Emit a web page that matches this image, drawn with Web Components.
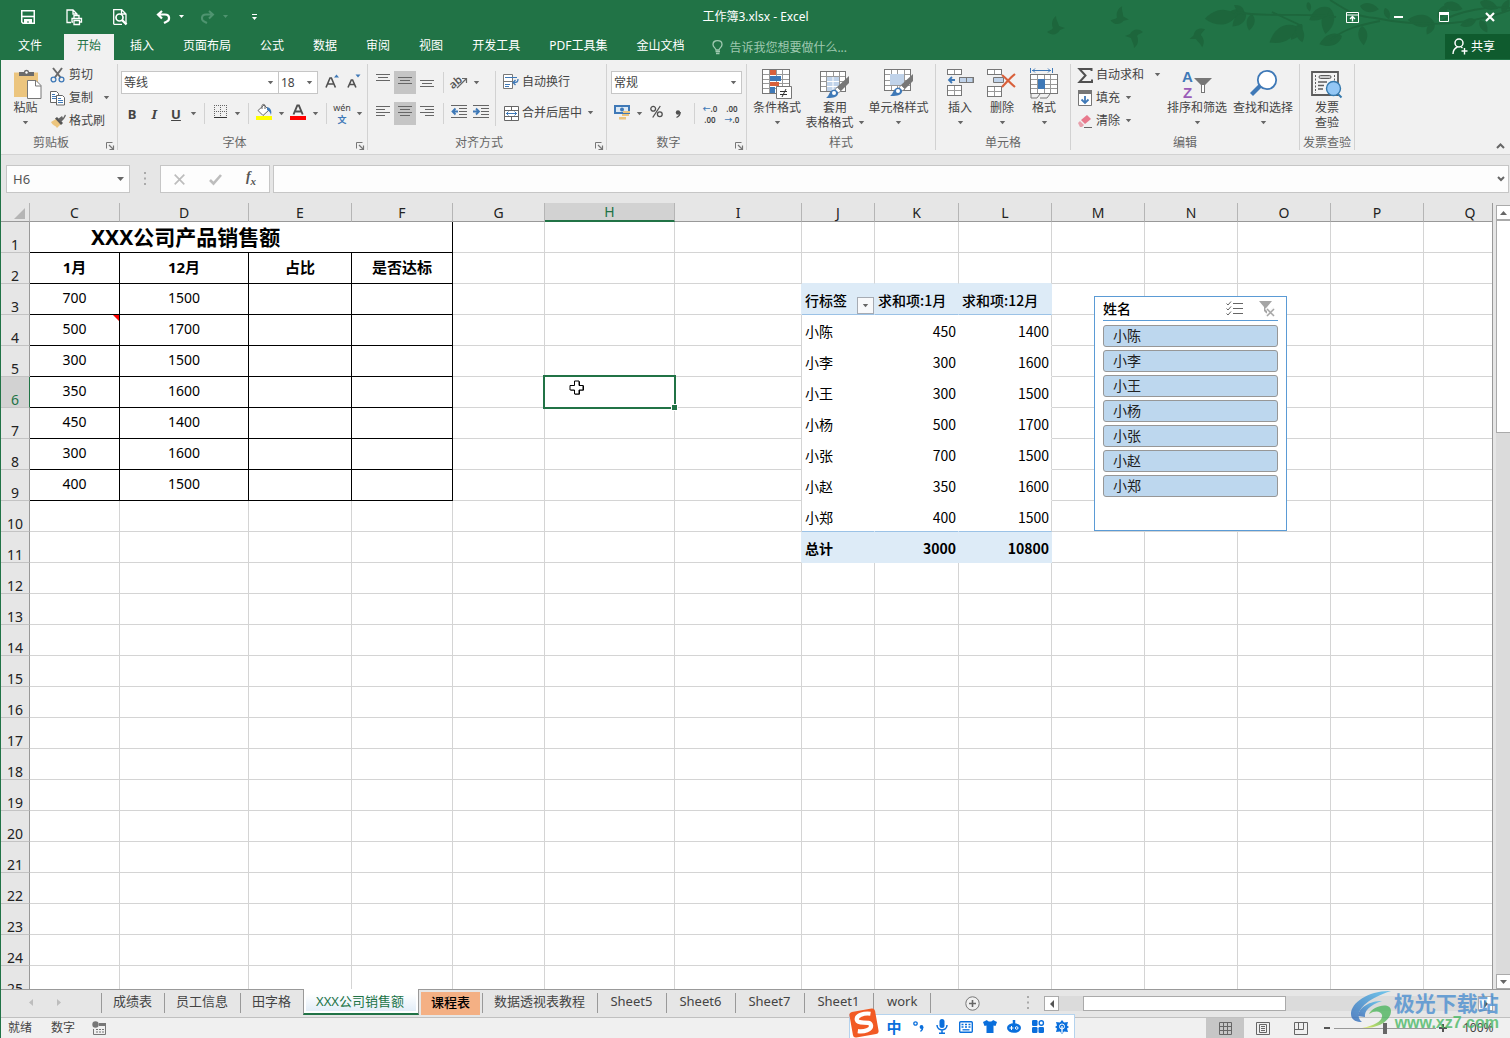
<!DOCTYPE html>
<html lang="zh-CN">
<head>
<meta charset="utf-8">
<title>工作簿3.xlsx - Excel</title>
<style>
html,body{height:100%}
body{margin:0;display:flex;flex-direction:column;overflow:hidden;box-sizing:border-box;border-left:1px solid #217346;background:#e6e6e6;color:#444;font:12px/16px "Noto Sans","Noto Sans CJK SC",sans-serif;position:relative}
</style>
</head>
<body>
<app-header heading="工作簿3.xlsx - Excel"></app-header>
<ribbon-bar></ribbon-bar>
<formula-bar cell="H6"></formula-bar>
<sheet-area>
  <sheet-grid></sheet-grid>
  <data-slicer slot="float" heading="姓名" items="小陈,小李,小王,小杨,小张,小赵,小郑"></data-slicer>
  <x-icon slot="float" class="pointer" name="pointer"></x-icon>
</sheet-area>
<sheet-tabs></sheet-tabs>
<status-bar></status-bar>
<ime-bar></ime-bar>
<site-mark></site-mark>

<script>
const B='#3f79b7', D='#505050';
const grid=(x,y,w,h,c,r,col='#777')=>{let s=`<rect x="${x+.5}" y="${y+.5}" width="${w}" height="${h}" fill="#fff" stroke="${col}"/>`;
  for(let i=1;i<c;i++){const p=Math.round(x+w*i/c)+.5;s+=`<path d="M${p} ${y+1}v${h-1}" stroke="#999"/>`}
  for(let i=1;i<r;i++){const p=Math.round(y+h*i/r)+.5;s+=`<path d="M${x+1} ${p}h${w-1}" stroke="#999"/>`}return s};
const lines=(a)=>a.map(([x,y,w])=>`<path d="M${x} ${y+.5}h${w}" stroke="#666"/>`).join('');
const brush=(x,y)=>`<g transform="translate(${x} ${y})"><path d="M23 0v7l-8 8-4-4z" fill="#777"/><path d="M11 11l4 4-3 2-3-3z" fill="#fff" stroke="#777" stroke-width=".8"/><path d="M0 22c3-2 3-5 5-7 3-3 8 0 7 3-1 4-7 4-12 4z" fill="${B}"/><circle cx="8" cy="17" r="2" fill="#fff"/></g>`;
/* name: [width, height, markup] */
const ICONS={
save:[14,14,`<path d="M.75.75h12.5v12.5H2L.75 12z" fill="none" stroke="#fff" stroke-width="1.5"/><path d="M1 6.5h12" stroke="#fff" stroke-width="1.6"/><path d="M3 9h8v4.500H8v-2H6v2H3z" fill="#fff"/>`],
print:[17,17,`<g fill="none" stroke="#fff" stroke-width="1.300"><path d="M5 13.500H1V1h6l4 4v1M7 1v4h4"/><path d="M8 9V6.500h5V9M7 13H6V9.500h9.500V13H14M8 11.500h5.500v4H8z"/></g>`],
preview:[14,16,`<path d="M13 4.500V15M.7 15.300V.700h8l4 4M.7 15.300H9M8.500 1v4h4" fill="none" stroke="#fff" stroke-width="1.300"/><circle cx="6.500" cy="8.500" r="3.500" fill="none" stroke="#fff" stroke-width="1.700"/><path d="M9 11l4.500 4.500" stroke="#fff" stroke-width="2.400"/>`],
undo:[15,14,`<path d="M6 1L2 4.500l4 4M2 4.500h7c5 0 5.500 6 1 7.500L8 13" fill="none" stroke="#fff" stroke-width="2.200"/>`],
redo:[15,14,`<path d="M9 1l4 3.500-4 4M13 4.500H6C1 4.500.5 10.500 5 12l2 1" fill="none" stroke="#4f9470" stroke-width="2"/>`],
qat:[5,7,`<path d="M0 .5h5" stroke="#fff"/><path d="M0 3h5L2.500 6z" fill="#fff"/>`],
winribbon:[13,11,`<path d="M.5.500h12v10H.5zM.5 3h12" fill="none" stroke="#fff"/><path d="M6.500 9.500V5M4 7l2.500-2.500L9 7" fill="none" stroke="#fff" stroke-width="1.400"/>`],
winmin:[9,2,`<path d="M0 1h9" stroke="#fff" stroke-width="2"/>`],
winmax:[10,10,`<path d="M.5.500h9v9H.5z" fill="none" stroke="#fff"/><path d="M0 1.500h10" stroke="#fff" stroke-width="3"/>`],
winclose:[10,10,`<path d="M1 1l8 8M9 1L1 9" stroke="#fff" stroke-width="2.200"/>`],
bulb:[12,15,`<path d="M4 10c0-2-3-2.500-3-5.500C1 2 3 .7 5.500.7S10 2 10 4.500C10 7.500 7 8 7 10z" fill="none" stroke="#9fc9b0" stroke-width="1.300"/><path d="M3.500 11.500h4.500M4 13.500h3.500" stroke="#9fc9b0" stroke-width="1.400"/>`],
person:[15,17,`<circle cx="7" cy="5" r="4" fill="none" stroke="#fff" stroke-width="1.500"/><path d="M1 16c0-4 2-6 4.500-7M9 9l1.500 1M9.500 13h6M12.500 10v6.500" fill="none" stroke="#fff" stroke-width="1.400"/>`],
paste:[25,30,`<path d="M1 3.500h24V28H1z" fill="#ecc57e"/><path d="M6 7V3h5c0-3 5-3 5 0h5v4z" fill="#6b6b6b"/><circle cx="13.500" cy="3.500" r="1.200" fill="#fff"/><path d="M14.500 11.500h8.500l5 5V29.500H14.500z" fill="#fff" stroke="#777"/><path d="M22.500 11.500v5.500h5.500" fill="none" stroke="#777"/>`],
cut:[16,16,`<path d="M3 1l8 10M12 1L4.500 11" stroke="#6a6a6a" stroke-width="2"/><circle cx="3.500" cy="12.500" r="2.400" fill="none" stroke="${B}" stroke-width="1.300"/><circle cx="11.500" cy="12.500" r="2.400" fill="none" stroke="${B}" stroke-width="1.300"/>`],
copy:[16,16,`<path d="M.5 1.500h6l2 2v9h-8z" fill="#fff" stroke="#666"/><path d="M2 4.500h3M2 6.500h5M2 8.500h5" stroke="${B}"/><path d="M6.500 5.500h6l2 2v7.500h-8z" fill="#fff" stroke="#666"/><path d="M8 8.500h3M8 10.500h5M8 12.500h5" stroke="${B}"/>`],
painter:[16,14,`<path d="M1 8l5-3 5 5-4 4C5 11 3 12 1 8z" fill="#ecc57e"/><path d="M5 4.500l2-1.500 6 6-2 2z" fill="#555"/><path d="M8 5l4-3 1 2 2-3.500 1 1-2 3.500-3 3z" fill="#666"/>`],
launch:[8,8,`<path d="M.5 6.500v-6h6" fill="none" stroke="#777"/><path d="M3 3l4 4M7.500 3.500v4h-4" fill="none" stroke="#777" stroke-width="1.200"/>`],
down:[7,4,`<path d="M.8 0h5.400L3.500 3.200z" fill="#666"/>`],
fontup:[14,14,`<path d="M1 13.500L5 4h1.400l4 9.500M2.700 10h6" fill="none" stroke="${D}" stroke-width="1.600"/><path d="M9 3.500h5L11.500.5z" fill="${B}"/>`],
fontdn:[14,14,`<path d="M1 13.500L4.300 6h1.300l3.300 7.500M2.500 10.500h5" fill="none" stroke="${D}" stroke-width="1.600"/><path d="M8.500.5h5L11 3.500z" fill="${B}"/>`],
border:[13,13,`<path d="M0 .5h13M0 6.500h13M.5 0v12M6.500 0v12M12.500 0v12" stroke="#666" stroke-dasharray="1 1"/><path d="M0 12.500h13" stroke="#333"/>`],
fill:[16,16,`<path d="M2 6.500L8 1l5 5-6 5.500z" fill="#fff" stroke="#666"/><path d="M6 5V1.500c0-1.500 3-1.500 3 0V5" fill="none" stroke="#666"/><path d="M11 3c4 1 5 4 4 8-1-3-2-4-4-5z" fill="${B}"/><path d="M0 12h16v4H0z" fill="#ff0"/>`],
color:[16,16,`<path d="M3.500 10.500L7.300 1.500h1.600l3.800 9M5 7.500h6" fill="none" stroke="${D}" stroke-width="1.900"/><path d="M0 12h16v4H0z" fill="#f00"/>`],
top:[14,14,lines([[0,0,14],[2,3,10],[0,6,14]])],
mid:[14,14,lines([[0,3,14],[2,6,10],[0,9,14]])],
bot:[14,14,lines([[0,6,14],[2,9,10],[0,12,14]])],
left:[14,14,lines([[0,1,14],[0,4,9],[0,7,14],[0,10,9]])],
center:[14,14,lines([[0,1,14],[2,4,10],[0,7,14],[2,10,10]])],
right:[14,14,lines([[0,1,14],[5,4,9],[0,7,14],[5,10,9]])],
orient:[17,16,`<text x="-2" y="12" transform="rotate(-40 6 9)" font-family="Noto Sans" font-size="11" font-weight="600" fill="#555">ab</text><path d="M6 15L15 6M11 5.500h4.500V10" fill="none" stroke="#666" stroke-width="1.200"/>`],
outdent:[16,14,lines([[0,0,16],[8,3,8],[8,6,8],[8,9,8],[0,12,16]])+`<path d="M7 6.500H2M4.500 3.500l-3 3 3 3" fill="none" stroke="${B}" stroke-width="1.800"/>`],
indent:[16,14,lines([[0,0,16],[8,3,8],[8,6,8],[8,9,8],[0,12,16]])+`<path d="M0 6.500h5M3 3.500l3 3-3 3" fill="none" stroke="${B}" stroke-width="1.800"/>`],
wrap:[16,16,`<path d="M.5.500h9v14h-9zM.5 7.500h9" fill="#fff" stroke="#777"/><path d="M2 3.500h12M2 10.500h5M2 12.500h4" stroke="${B}"/><path d="M15 5c0 3-1 3.500-4.500 3.500M12.500 6l-2.500 2.500L12.500 11" fill="none" stroke="${B}" stroke-width="1.300"/>`],
merge:[15,15,`<path d="M.5.500h14v14H.5zM.5 4.500h14M.5 10.500h14M7.500.500v4M7.500 10.500v4" fill="#fff" stroke="#666"/><path d="M2 7.500h11M4.500 5.500l-2 2 2 2M10.500 5.500l2 2-2 2" fill="none" stroke="${B}"/>`],
money:[16,16,`<path d="M0 1h16v9H0z" fill="${B}"/><path d="M2 3h12v5H2z" fill="#dce9f5"/><circle cx="8" cy="5.500" r="2" fill="${B}"/><path d="M9 7h7v2H9zM8 10h7v2H8zM5 13h7v2.500H5z" fill="#ecc57e"/>`],
percent:[13,13,`<circle cx="3.200" cy="3.800" r="2.400" fill="none" stroke="${D}" stroke-width="1.300"/><circle cx="9.800" cy="9.200" r="2.400" fill="none" stroke="${D}" stroke-width="1.300"/><path d="M10.300 1l-7.600 11.500" stroke="${D}" stroke-width="1.300"/>`],
comma:[6,8,`<circle cx="3" cy="2.500" r="2.200" fill="${D}"/><path d="M5.200 2c0 3-1.200 4.500-3.700 5.500" fill="none" stroke="${D}" stroke-width="1.300"/>`],
cond:[30,31,grid(0,1,27,24,4,5)+`<path d="M8 2h6v5H8z" fill="#d9603b"/><path d="M8 8h11v5H8z" fill="${B}"/><path d="M8 14h9v4H8z" fill="#d9603b"/><path d="M8 19h5v6H8z" fill="${B}"/><path d="M14.500 18.500h15v12h-15z" fill="#fff" stroke="#777"/><path d="M18 23.500h7M18 26.500h7M24 21l-4 8" stroke="#333"/>`],
tblfmt:[30,30,grid(0,2,25,20,4,4)+`<path d="M7 8h12v14H7z" fill="#c0d3ea"/><path d="M13 8v14M7 12.500h12M7 17.500h12" stroke="#fff"/>`+brush(6,7)],
cellsty:[30,31,grid(0,1,26,21,4,4)+`<path d="M6 6h14v11H6z" fill="#c0d3ea"/>`+brush(6,6)],
ins:[27,31,grid(0,1,14,5,2,1)+grid(12,9,14,5,2,1)+`<path d="M12.500 9.500h13.500v5H12.500z" fill="#c0d3ea" stroke="#777"/><path d="M19.500 9v6" stroke="#777"/>`+grid(0,17,14,10,2,2)+`<path d="M8 12H2.500M5 9l-3 3 3 3" fill="none" stroke="${B}" stroke-width="1.800"/>`],
del:[30,31,grid(0,1,14,5,2,1)+`<path d="M6.500 9.500h10v5h-10z" fill="#c0d3ea" stroke="#777"/>`+grid(0,18,14,10,2,2)+`<path d="M15 7c5 4 8 8 13 12M28 6c-5 4-8 8-13 13" fill="none" stroke="#d9603b" stroke-width="2.200"/>`],
fmt:[28,31,`<path d="M.5 0v5M22.500 0v5M2 2.500h19M5 .500l-2 2 2 2M18 .500l2 2-2 2" fill="none" stroke="${B}"/>`+grid(0,6,27,19,4,4)+`<path d="M8 11h7v10H8z" fill="${B}"/><path d="M1 26v4h6l3-4M10 30h7l3-4" fill="none" stroke="#777"/>`],
sum:[15,15,`<path d="M13.500 3V1H1.500l6 6.500-6 6.500h12.500v-2.500" fill="none" stroke="${D}" stroke-width="2"/>`],
fillc:[14,16,`<path d="M.5 1.500h13v14H.5z" fill="#fff" stroke="#777"/><path d="M0 0h14v4H0z" fill="#777"/><path d="M7 6v7M3.500 9.500L7 13l3.500-3.500" fill="none" stroke="${B}" stroke-width="1.800"/>`],
clear:[14,13,`<path d="M3 5l6-5 4 4-6 5z" fill="#e8798c"/><path d="M0 8l2-2 4 4-2 2H2z" fill="#e8a0ac"/><path d="M6 12.500h8" stroke="#666"/>`],
sort:[30,30,`<text x="0" y="13" font-family="Liberation Sans" font-size="15" font-weight="700" fill="${B}">A</text><text x="1" y="29" font-family="Liberation Sans" font-size="15" font-weight="700" fill="#9a5cb8">Z</text><path d="M12 9h18l-7 7v8h-4v-8z" fill="#777"/><path d="M20 16h2v7h-2z" fill="#fff"/>`],
find:[27,29,`<path d="M11 16L1.500 25.500" stroke="${B}" stroke-width="4.200"/><circle cx="17" cy="11" r="9.200" fill="#fff" stroke="${B}" stroke-width="1.800"/>`],
invoice:[32,28,`<path d="M1 2h26v23H1z" fill="#f4f4f4" stroke="#5c5c5c" stroke-width="1.800"/><path d="M4.500 5v18M23.500 5v6" stroke="#5c5c5c" stroke-dasharray="2 1.500"/><rect x="8" y="5.500" width="12" height="3" rx="1.500" fill="#ccc" stroke="#5c5c5c"/><path d="M7 12h9M7 15.500h6M7 19h5" stroke="#5c5c5c" stroke-width="1.500"/><circle cx="22.500" cy="18.500" r="7" fill="#93c7f5" stroke="#3579ad" stroke-width="1.400"/><path d="M27 24l3.500 3.500" stroke="#3579ad" stroke-width="2"/>`],
up:[9,6,`<path d="M1 5l3.500-3.500L8 5" fill="none" stroke="#666" stroke-width="2"/>`],
chev:[8,6,`<path d="M1 1l3 3 3-3" fill="none" stroke="#666" stroke-width="2"/>`],
cross:[11,11,`<path d="M.7.700l9.600 9.600M10.300.7L.7 10.300" stroke="#bdbdbd" stroke-width="1.700"/>`],
check:[13,11,`<path d="M1 6l3.500 3.500L12 1" fill="none" stroke="#bdbdbd" stroke-width="2.600"/>`],
dots:[2,14,`<path d="M0 1h2M0 6.500h2M0 12h2" stroke="#aaa" stroke-width="2"/>`],
multi:[17,15,`<path d="M7 2.500h10M7 7.500h10M7 12.500h10" stroke="#666"/><path d="M.5 2.500l1.500 1.500 3-3.500M.5 7.500l1.500 1.500 3-3.500M.5 12.500l1.500 1.500 3-3.500" fill="none" stroke="#666"/>`],
nofilter:[16,16,`<path d="M0 0h13L8 6v7L5 10V6z" fill="#a5a5a5"/><path d="M7 7l8 8M15 7l-8 8" stroke="#f8f8f8" stroke-width="3"/><path d="M8 8l7 7M15 8l-7 7" stroke="#a5a5a5" stroke-width="1.500"/>`],
pointer:[16,16,`<path d="M6 1.500h5v4h4v5h-4v4H6v-4H2v-5h4z" fill="#000"/><path d="M5.500 1h4.500v4.500H14V10h-4v4H5.500v-4H1V5.500h4.500z" fill="#fff" stroke="#000"/>`],
tl:[4,7,`<path d="M4 0v7L0 3.500z" fill="#bdbdbd"/>`], tr:[4,7,`<path d="M0 0v7l4-3.500z" fill="#bdbdbd"/>`],
al:[4,8,`<path d="M4 0v8L0 4z" fill="#555"/>`], ar:[4,8,`<path d="M0 0v8l4-4z" fill="#555"/>`],
au:[7,4,`<path d="M0 4h7L3.500 0z" fill="#666"/>`], ad:[7,4,`<path d="M0 0h7L3.500 4z" fill="#666"/>`],
add:[15,15,`<circle cx="7.500" cy="7.500" r="6.700" fill="#f0f0f0" stroke="#777"/><path d="M7.500 4v7M4 7.500h7" stroke="#666" stroke-width="1.600"/>`],
macro:[14,14,`<circle cx="3.500" cy="3.500" r="3.200" fill="#777"/><path d="M8 2.500h5.500v11H1.500V8" fill="none" stroke="#777"/><path d="M7 2h7v3H7z" fill="#777"/><path d="M4 8.500h2M7 8.500h2M10 8.500h2M4 11h2M7 11h2M10 11h2" stroke="#777"/>`],
vnorm:[13,13,`<path d="M.5.500h12v12H.5zM.5 4.500h12M.5 8.500h12M4.500.500v12M8.500.500v12" fill="none" stroke="#666"/>`],
vpage:[14,13,`<path d="M.5.500h13v12H.5zM3.500 2.500h7v8h-7zM5 4.500h4M5 6.500h4M5 8.500h4" fill="none" stroke="#666"/>`],
vbreak:[14,13,`<path d="M.5.500h13v12H.5zM4.500.500v7M9.500.500v7M.500 7.500h9" fill="none" stroke="#666"/>`],
sogou:[28,28,`<g transform="rotate(-10 14 14)"><rect x="1" y="1" width="26" height="26" rx="3" fill="#f25a24"/><path d="M22 6C16 4 7 5 7.500 10c.5 5 13 2 13 7.500 0 4.500-8 5.500-14 3.500" fill="none" stroke="#fff" stroke-width="4.200"/></g>`],
punct:[11,11,`<circle cx="2.500" cy="2.500" r="1.700" fill="none" stroke="#0a6fdc" stroke-width="1.300"/><circle cx="8.500" cy="6" r="1.900" fill="#0a6fdc"/><path d="M9.800 6c0 2-.8 3.500-2.300 4.500" stroke="#0a6fdc" stroke-width="1.400" fill="none"/>`],
mic:[12,15,`<rect x="3.500" y="0" width="5" height="9" rx="2.500" fill="#0a6fdc"/><path d="M1 6c0 6.500 10 6.500 10 0M6 11v3M3 14.200h6" fill="none" stroke="#0a6fdc" stroke-width="1.500"/>`],
kbd:[14,12,`<rect x=".7" y=".7" width="12.600" height="10.600" rx="1" fill="#fff" stroke="#0a6fdc" stroke-width="1.400"/><path d="M2.500 3.500h9M2.500 6h9" stroke="#0a6fdc" stroke-width="1.500" stroke-dasharray="2 1.500"/><path d="M3.500 8.800h7" stroke="#0a6fdc" stroke-width="1.300"/>`],
shirt:[14,13,`<path d="M4 0c1 2 5 2 6 0l4 2-1.500 4-2-.5V13h-7V5.500l-2 .500L0 2z" fill="#0a6fdc"/>`],
robot:[14,13,`<ellipse cx="7" cy="8" rx="7" ry="4.800" fill="#0a6fdc"/><path d="M7 0v4" stroke="#0a6fdc" stroke-width="2.500"/><path d="M2.500 8h4M4.500 6v4" stroke="#fff"/><circle cx="9.700" cy="8" r="1.300" fill="none" stroke="#fff"/>`],
apps:[12,13,`<rect width="5.500" height="6" rx="1.200" fill="#0a6fdc"/><rect x="7.200" y=".7" width="4.200" height="4.600" rx="2" fill="none" stroke="#0a6fdc" stroke-width="1.400"/><rect y="7" width="5.500" height="6" rx="1.200" fill="#0a6fdc"/><rect x="6.500" y="7" width="5.500" height="6" rx="1.200" fill="#0a6fdc"/>`],
gear:[14,14,`<path d="M7 0l2 2.500 4-.5-1 3.500L14 7l-2 1.500 1 3.500-4-.5-2 2.500-2-2.500-4 .500 1-3.500L0 7l2-1.500L1 2l4 .5z" fill="#0a6fdc"/><circle cx="7" cy="6.500" r="2.500" fill="none" stroke="#fff"/><path d="M7 6v7" stroke="#fff" stroke-width="1.300"/>`],
swirl:[44,40,`<defs><linearGradient id="a" x1="0" y1="1" x2="1" y2="0"><stop stop-color="#3168b8"/><stop offset="1" stop-color="#55c0ee"/></linearGradient><linearGradient id="b" x1="0" y1="1" x2="1" y2="0"><stop stop-color="#e4e83c"/><stop offset=".6" stop-color="#4fb660"/></linearGradient></defs><path d="M41 1C20 0 1 12 1 24c0 6 5 8 11 8-9-7 0-22 29-31z" fill="url(#a)"/><path d="M8 26c1-9 12-15 24-15-12 4-18 10-17 16z" fill="url(#a)"/><path d="M12 38c12-2 21-7 20-13-1-4-7-5-13-1 3-8 22-13 22-3 0 10-14 18-29 17z" fill="url(#b)"/>`],
art:[470,60,(()=>{const bird=(x,y,r)=>`<path transform="translate(${x} ${y}) rotate(${r})" d="M-9 4c3-2 5-2 6-4-2-4-1-9 3-12 0 4 2 6 3 10l6 2-5 2c-3 5-8 6-13 2z"/>`;
 const leaf=(x,y,r,s)=>`<path transform="translate(${x} ${y}) rotate(${r}) scale(${s})" d="M0 0c5-7 15-8 24 0-9 8-19 7-24 0z"/>`;
 return `<g fill="#1d663c">${bird(16,28,0)}${bird(80,18,10)}${bird(94,36,180)}${bird(158,36,160)}`+
 leaf(205,12,170,.8)+leaf(206,13,135,.8)+leaf(204,12,215,.5)+leaf(212,14,100,.7)+leaf(196,16,175,1.300)+leaf(262,24,125,.8)+leaf(256,26,148,1.300)+leaf(258,26,75,.7)+leaf(290,8,100,1.100)+leaf(290,8,150,1)+leaf(268,2,80,.4)+leaf(302,36,160,1)+leaf(322,26,85,.8)+leaf(320,6,10,.8)+leaf(345,8,70,.5)+leaf(394,22,185,1.100)+leaf(394,22,120,.6)+leaf(398,18,-55,.7)+leaf(436,20,160,.7)+leaf(440,20,60,.6)+leaf(462,12,-60,.6)+leaf(440,2,20,.8)+leaf(404,4,15,.8)+`</g><path d="M196 12c30 6 70 0 100 5M232 12l30 14M290 0c14 8 22 16 45 18 40 8 90 10 140-10M290 40c16-12 30-15 50-19M400 22c20-12 50-16 70-14" fill="none" stroke="#1d663c" stroke-width="1.800"/>`})()]
};
const svg=n=>{const [w,h,m]=ICONS[n];return `<svg width="${w}" height="${h}" viewBox="0 0 ${w} ${h}" aria-hidden="true">${m}</svg>`};
const define=(name,render)=>customElements.define(name,class extends HTMLElement{
  connectedCallback(){ if(this.shadowRoot) return;
    const t=document.createElement('template'); t.innerHTML=render(this);
    this.attachShadow({mode:'open'}).append(t.content.cloneNode(true)); }});
const BASE=`:host,*{box-sizing:border-box}button,input,select{font:inherit;color:inherit;margin:0;padding:0;border:0;background:none;border-radius:0}button{display:flex;align-items:center;justify-content:center;white-space:nowrap}`;
const I=n=>`<x-icon name="${n}"></x-icon>`;

define('x-icon',el=>`<style>:host{display:inline-flex;flex:none}:host(.pointer){position:absolute;left:568px;top:177px}svg{display:block;overflow:visible}</style>${svg(el.getAttribute('name'))}`);

define('app-header',el=>`<style>${BASE}
:host{display:block;position:relative;flex:none;background:#217346;color:#fff;overflow:hidden}
.art{position:absolute;right:0;top:0;display:flex}
.title{display:grid;grid-template-columns:1fr auto 1fr;height:34px;align-items:center;position:relative}
.qat{display:flex;align-items:center;padding-left:4px;height:32px}
.qat button{width:46px;height:32px}.qat .n{width:32px;padding-left:8px}.qat .a{width:12px}.qat .l{width:46px}
.a path{fill:#fff}
.win{display:flex;justify-content:flex-end;margin-right:-3px}.win button{width:46px;height:32px}
.tabs{display:flex;height:26px;position:relative;padding-left:3px;gap:3px}
.tabs a{color:#fff;text-decoration:none;padding:0 13px;line-height:24px;white-space:nowrap}
.tabs a:first-child{margin:0 6px 0 1px}
.tabs a.on{background:#f1f1f1;color:#217346}
.tell{display:flex;align-items:center;gap:5px;margin-left:12px;color:#9fc9b0;padding-top:1px}
.tell input{width:150px}.tell input::placeholder{color:#9fc9b0;opacity:1}
.share{margin-left:auto;background:#0f5b2e;height:25px;width:65px;gap:4px;padding-right:8px;padding-left:0;align-self:flex-start;line-height:20px}
</style><span class="art">${I('art')}</span>
<div class="title"><div class="qat"><button aria-label="保存">${I('save')}</button><button aria-label="打印">${I('print')}</button><button aria-label="预览">${I('preview')}</button><button class="n" aria-label="撤消">${I('undo')}</button><button class="a" aria-label="撤消列表"><svg width="5" height="4"><path d="M0 0h5L2.500 3z"/></svg></button><button class="n" aria-label="恢复">${I('redo')}</button><button class="a" aria-label="恢复列表"><svg width="5" height="4"><path d="M0 0h5L2.500 3z" style="fill:#4f9470"/></svg></button><button class="l" aria-label="自定义">${I('qat')}</button></div>
<span>${el.getAttribute('heading')}</span>
<div class="win">${['winribbon','winmin','winmax','winclose'].map(n=>`<button aria-label="${n}">${I(n)}</button>`).join('')}</div></div>
<nav class="tabs">${['文件','开始','插入','页面布局','公式','数据','审阅','视图','开发工具','PDF工具集','金山文档'].map((t,i)=>`<a href="#"${i==1?' class="on"':''}>${t}</a>`).join('')}
<label class="tell">${I('bulb')}<input aria-label="告诉我您想要做什么" placeholder="告诉我您想要做什么..."></label><button class="share">${I('person')}共享</button></nav>`);

define('ribbon-group',el=>`<style>${BASE}:host{display:flex;flex-direction:column;flex:none;border-right:1px solid #d2d2d2;height:86px;position:relative}
.c{display:flex;flex:none;height:71px}.l{flex:none;line-height:16px;text-align:center;color:#666;white-space:nowrap}:host([launch]) .l{padding-right:16px}button{position:absolute;right:2px;bottom:-1px;width:10px;height:10px}</style>
<div class="c"><slot></slot></div><div class="l">${el.getAttribute('label')}</div>${el.hasAttribute('launch')?`<button aria-label="对话框启动器">${I('launch')}</button>`:''}`);

/* large ribbon button: icon over one or two lines */
define('big-button',el=>`<style>${BASE}:host{display:block;flex:none}button{flex-direction:column;justify-content:flex-start;width:100%;padding-top:3px;line-height:15px}.i{height:33px;display:flex;align-items:center}.s{display:flex;align-items:center;gap:4px;height:15px}</style>
<button><span class="i">${I(el.getAttribute('icon'))}</span><span>${el.getAttribute('label')}</span><span class="s">${el.getAttribute('second')||''}${el.hasAttribute('drop')?I('down'):''}</span></button>`);

/* compact ribbon button: icon, optional text, optional arrow */
define('small-button',el=>{const l=el.getAttribute('label')||'',ic=el.getAttribute('icon');return `<style>${BASE}:host{display:flex;flex:none}button{height:23px;gap:3px;min-width:22px}
:host([on]) button{background:#c5c5c5}:host([text]) .i{width:16px;display:flex;justify-content:center}:host([text]) button{padding-bottom:1px}:host([drop]:not([text])) .d{width:12px;min-width:12px}.d{min-width:12px}:host([text]) .d{margin-left:2px}:host([far]) .d{margin-left:7px}</style>
<button aria-label="${l||ic||''}">${ic?`<span class="i">${I(ic)}</span>`:''}<slot>${el.hasAttribute('text')?l:''}</slot></button>${el.hasAttribute('drop')?`<button class="d" aria-label="更多">${I('down')}</button>`:''}`});

define('combo-box',el=>`<style>${BASE}:host{display:flex;flex:none;position:relative;height:23px;background:#fff;border:1px solid #c6c6c6}select{appearance:none;width:100%;padding-left:2px;outline:0}x-icon{position:absolute;right:4px;top:9px;pointer-events:none}</style>
<select aria-label="${el.getAttribute('label')}"><option>${el.getAttribute('value')}</option></select>${I('down')}`);

const sb=(icon,extra='')=>`<small-button icon="${icon}" ${extra}></small-button>`;
const bb=(icon,label,w,second)=>`<big-button icon="${icon}" label="${label}" style="width:${w}px" ${second==='-'?'':'drop'} ${second&&second!=='-'?`second="${second}"`:''}></big-button>`;
define('ribbon-bar',()=>`<style>${BASE}
:host{display:flex;flex:none;height:95px;padding-top:4px;background:#f1f1f1;border-bottom:1px solid #d2d2d2;position:relative}
.col{display:flex;flex-direction:column}.row{display:flex;align-items:center}.bigs{display:flex}
.two{padding-top:7px;gap:8px}.sep{width:1px;height:21px;background:#d2d2d2;margin:0 4px 0 5px}.tall{width:1px;height:55px;background:#d2d2d2;margin:7px 4px 0 3px}
b,i,u{font:700 13px/16px "Noto Sans",sans-serif;color:#444}i{font:italic 700 13px/16px "Noto Serif","Liberation Serif",serif}
.wen,.dec{display:flex;flex-direction:column;align-items:center;font-size:9px;line-height:12px;color:#444}.wen .hz{color:#3f79b7;font-weight:700}.dec em{font-style:normal;color:#3f79b7;font-weight:700}.dec{font-size:8px;line-height:11px;font-weight:600}
.up{position:absolute;right:2px;bottom:2px;width:16px;height:12px}
.pl3{padding-left:3px}.pl4{padding-left:4px}
</style>
<ribbon-group label="剪贴板" launch style="width:117px">${bb('paste','粘贴',49)}<div class="col">
<small-button text icon="cut" label="剪切"></small-button><small-button text icon="copy" label="复制" drop far></small-button><small-button text icon="painter" label="格式刷"></small-button></div></ribbon-group>
<ribbon-group label="字体" launch style="width:250px"><div class="col two pl3"><div class="row"><combo-box label="字体" value="等线" style="width:158px"></combo-box><combo-box label="字号" value="18" style="width:40px;margin-left:-1px"></combo-box><span class="row pl3">${sb('fontup')}${sb('fontdn')}</span></div>
<div class="row"><small-button label="加粗"><b>B</b></small-button><small-button label="倾斜"><i>I</i></small-button><small-button label="下划线" drop><u>U</u></small-button><span class="sep"></span>${sb('border','drop')}<span class="sep"></span>${sb('fill','drop')}${sb('color','drop')}<span class="sep"></span><small-button label="拼音" drop><span class="wen"><span>wén</span><span class="hz">文</span></span></small-button></div></div></ribbon-group>
<ribbon-group label="对齐方式" launch style="width:239px"><div class="col two pl4"><div class="row">${sb('top')}${sb('mid','on')}${sb('bot')}<span class="sep"></span>${sb('orient','drop')}</div><div class="row">${sb('left')}${sb('center','on')}${sb('right')}<span class="sep"></span>${sb('outdent')}${sb('indent')}</div></div><span class="tall"></span>
<div class="col two pl3"><small-button text icon="wrap" label="自动换行"></small-button><small-button text icon="merge" label="合并后居中" drop></small-button></div></ribbon-group>
<ribbon-group label="数字" launch style="width:140px"><div class="col two pl4"><combo-box label="数字格式" value="常规" style="width:131px"></combo-box><div class="row">${sb('money','drop')}${sb('percent')}${sb('comma')}<span class="sep"></span><small-button label="增加小数位数"><span class="dec"><span><em>←</em>.0</span><span>.00</span></span></small-button><small-button label="减少小数位数"><span class="dec"><span>.00</span><span><em>→</em>.0</span></span></small-button></div></div></ribbon-group>
<ribbon-group label="样式" style="width:189px">${bb('cond','条件格式',60)}${bb('tblfmt','套用',56,'表格格式')}${bb('cellsty','单元格样式',71)}</ribbon-group>
<ribbon-group label="单元格" style="width:135px"><div class="bigs pl3">${bb('ins','插入',42)}${bb('del','删除',42)}${bb('fmt','格式',42)}</div></ribbon-group>
<ribbon-group label="编辑" style="width:229px"><div class="col" style="width:93px;padding-left:6px"><small-button text icon="sum" label="自动求和" drop far></small-button><small-button text icon="fillc" label="填充" drop></small-button><small-button text icon="clear" label="清除" drop></small-button></div>${bb('sort','排序和筛选',66)}${bb('find','查找和选择',66)}</ribbon-group>
<ribbon-group label="发票查验" style="width:55px">${bb('invoice','发票',54,'-').replace('style','second="查验" style')}</ribbon-group>
<button class="up" aria-label="折叠功能区">${I('up')}</button>`);

define('formula-bar',el=>`<style>${BASE}
:host{display:flex;flex:none;padding:10px 1px 10px 5px;background:#e6e6e6;color:#555}
.box{display:flex;align-items:center;height:28px;background:#fdfdfd;border:1px solid #c6c6c6}
.name{width:124px}.name input{width:100%;min-width:0;padding-left:6px;font-size:13px}.name button{width:18px;flex:none}
.dots{width:30px;display:flex;align-items:center;justify-content:center}
.fx{width:110px}.fx button{flex:1;height:26px}.fx i{font:italic 700 14px/16px "Liberation Serif",serif}.fx sub{font-size:11px}
.in{flex:1;margin-left:3px}.in input{flex:1;height:26px;padding-left:6px}.in button{width:15px}
</style><div class="box name"><input aria-label="名称框" value="${el.getAttribute('cell')}"><button aria-label="名称列表">${I('ad')}</button></div><span class="dots">${I('dots')}</span>
<div class="box fx"><button aria-label="取消">${I('cross')}</button><button aria-label="输入">${I('check')}</button><button aria-label="插入函数"><i>f<sub>x</sub></i></button></div>
<div class="box in"><input aria-label="编辑栏"><button aria-label="展开">${I('chev')}</button></div>`);

define('sheet-area',()=>`<style>${BASE}
:host{display:flex;flex:1;min-height:0;position:relative;overflow:hidden}
::slotted(sheet-grid){flex:1;min-width:0}
.v{flex:none;width:17px;padding:2px 0 0 3px;display:flex;flex-direction:column}
.t{flex:1;background:#dbdbdb;display:flex;flex-direction:column}
.t button{width:100%;height:15px;background:#fff;border:1px solid #aaa;border-right:0}.th{height:213px;background:#fff;border:1px solid #aaa;border-right:0}.t button:last-child{margin-top:auto}
</style><slot></slot><div class="v"><div class="t"><button aria-label="上">${I('au')}</button><div class="th"></div><button aria-label="下">${I('ad')}</button></div></div><slot name="float"></slot>`);

const COLS=[['C',90],['D',129],['E',103],['F',101],['G',92],['H',130],['I',127],['J',73],['K',84],['L',93],['M',93],['N',93],['O',93],['P',93],['Q',93]];
const LEFT=[['700','1500'],['500','1700'],['300','1500'],['350','1600'],['450','1400'],['300','1600'],['400','1500']];
const PIV=[['小陈','450','1400'],['小李','300','1600'],['小王','300','1500'],['小杨','500','1700'],['小张','700','1500'],['小赵','350','1600'],['小郑','400','1500']];
define('sheet-grid',()=>{
 let rows='';
 for(let r=1;r<=25;r++){
  let s=`<tr><th scope="row" class="rh${r==6?' sel':''}">${r}</th>`;
  COLS.forEach(([c],i)=>{
   if(r==1&&i>0&&i<4) return;
   let k='',t='',a='';
   if(i<4&&r<=9){k='k';if(r==1){a=' colspan="4"';k+=' ttl';t='XXX公司产品销售额'}
    else if(r==2){k+=' b';t=['1月','12月','占比','是否达标'][i]}
    else t=LEFT[r-3][i]||'';
    if(r==4&&i==0)t+='<span class="note"></span>';}
   if(c=='H'&&r==6)t='<span class="cur"></span>';
   if(c=='I'&&(r==3||r==11))k='pe';
   if('JKL'.includes(c)){
    if(r==2)k='pu';
    if(r==3){k='p ph';t=['行标签<button aria-label="筛选">'+I('down')+'</button>','求和项:1月','求和项:12月'][i-7]}
    if(r>3&&r<11){k='p pb'+(i>7?' n':'')+(r==10?' pz':'');t=PIV[r-4][i-7]}
    if(r==11){k='p ph pt'+(i>7?' n':'');t=['总计','3000','10800'][i-7]}
    if(c=='L'&&r>3&&r<11)k+=' pr';}
   s+=`<td${a}${k?` class="${k}"`:''}>${t}</td>`;});
  rows+=s+'</tr>';}
 return `<style>${BASE}
:host{display:block;overflow:hidden;border-right:1px solid #999;background:linear-gradient(#e6e6e6 18px,#fff 18px);color:#000}
table{table-layout:fixed;border-collapse:separate;border-spacing:0;width:${29+COLS.reduce((a,c)=>a+c[1],0)}px;font-size:14px;line-height:18px}
th{font-weight:400;padding:0;background:#e6e6e6;color:#222}
thead th{height:19px;border-right:1px solid #b5b5b5;border-bottom:1px solid #999;padding-top:1px;line-height:17px}
thead th.sel{background:#d2d2d2;color:#217346;border-bottom:2px solid #217346;line-height:16px}
.corner svg{display:block;margin:2px 4px 0 auto}
.rh{height:31px;vertical-align:bottom;line-height:15px;border-right:1px solid #999;border-bottom:1px solid #c3c3c3}
.rh.sel{background:#d2d2d2;color:#217346;border-right-color:#217346}
td{padding:0;position:relative;border-right:1px solid #d4d4d4;border-bottom:1px solid #d4d4d4;white-space:nowrap}
.k{border-color:#000;text-align:center;padding-bottom:2px}.b{font-weight:700;font-size:15px}
.ttl{font-size:21px;font-weight:700;line-height:26px;text-align:left;padding:0 0 0 61px}
.note{position:absolute;right:0;top:0;border:3px solid transparent;border-top-color:#f00;border-right-color:#f00}
.cur{position:absolute;inset:-2px;border:2px solid #217346;z-index:1}.cur::after{content:"";position:absolute;right:-3px;bottom:-3px;width:5px;height:5px;background:#217346;outline:1px solid #fff}
.p{font:14px/20px "Noto Sans CJK SC","Noto Sans",sans-serif;padding:1px 2px 0 3px}
.ph{background:#ddebf7;border-right-color:#ddebf7;border-bottom-color:#9bc2e6;font-weight:500}.pt{border-bottom-color:#ddebf7;font-weight:700}
.pb{border-color:#fff}.n{text-align:right}.pz{border-bottom-color:#9bc2e6}.pr{border-right-color:#d4d4d4}.pu{border-bottom-color:#ddebf7}.pe{border-right-color:#ddebf7}
td button{position:absolute;right:0;bottom:0;width:17px;height:17px;background:#f8f9fb;border:1px solid #a6abb3}
</style><table><colgroup><col style="width:29px">${COLS.map(c=>`<col style="width:${c[1]}px">`).join('')}</colgroup>
<thead><tr><th class="corner"><svg width="11" height="11"><path d="M11 0v11H0z" fill="#b5b5b5"/></svg></th>${COLS.map(c=>`<th scope="col"${c[0]=='H'?' class="sel"':''}>${c[0]}</th>`).join('')}</tr></thead><tbody>${rows}</tbody></table>`});

define('data-slicer',el=>`<style>${BASE}
:host{position:absolute;left:1093px;top:93px;width:193px;height:235px;border:1px solid #5b9bd5;background:#fff;padding:0 8px;color:#222;font:14px/20px "Noto Sans CJK SC",sans-serif}
header{display:flex;height:24px;align-items:center;border-bottom:1px solid #5b9bd5;margin-bottom:4px;color:#000;font-weight:500}header span{flex:1;padding-bottom:2px}header button{width:32px;justify-content:flex-end;padding-right:3px}
.list{display:flex;flex-direction:column;gap:3px}.list button{justify-content:flex-start;height:22px;padding:0 0 2px 9px;background:#bdd7ee;border:1px solid #979797;border-radius:3px}
</style><header><span>${el.getAttribute('heading')}</span><button aria-label="多选">${I('multi')}</button><button aria-label="清除筛选器">${I('nofilter')}</button></header><div class="list">${el.getAttribute('items').split(',').map(t=>`<button>${t}</button>`).join('')}</div>`);

const TABS=['成绩表','员工信息','田字格','XXX公司销售额','课程表','数据透视表教程','Sheet5','Sheet6','Sheet7','Sheet1','work'];
define('sheet-tabs',()=>`<style>${BASE}
:host{display:flex;flex:none;height:29px;border-top:1px solid #999;background:#e6e6e6;font-size:13px;align-items:flex-start}
.nav{display:flex;width:101px;padding-left:16px;height:25px;border-right:1px solid #999;margin:0;clip-path:inset(3px 0 2px 0)}.nav button{width:28px}
.tab{height:25px;padding:0 12px 0 11px;line-height:22px;position:relative;align-items:flex-start;border-right:1px solid transparent}
.tab::after{content:"";position:absolute;right:-1px;top:3px;bottom:2px;width:1px;background:#999}
.lat{padding:0 13px 0 12px}
.on{background:linear-gradient(#fff 20%,#dfebf7);color:#217346;border:solid #999;border-width:0 1px;border-bottom:2px solid #217346;box-shadow:inset 0 0 0 2px #fff;padding:0 14px 0 12px;margin:-1px 0 0 -1px;height:26px;line-height:24px}
.on::after,.or::after{display:none}
.or{background:#f4b084;color:#000;font-weight:500;margin:2px 0 0 2px;height:23px;line-height:20px;padding:0 10px;border:0}
.gap{border-left:1px solid #999;height:20px;margin:3px 0 0 2px}
.lat{min-width:69px}.lat:last-of-type{min-width:0}
.add{width:30px;height:26px;margin-left:26px}.dots{margin:6px 15px 0 auto;display:flex}
.h{display:flex;width:449px;height:15px;background:#dbdbdb;margin:6px 17px 0 0}.h button{width:15px;flex:none;background:#fff;border:1px solid #aaa}.th{background:#fff;border:1px solid #aaa;width:203px;margin-left:24px;margin-right:auto}
</style><div class="nav"><button aria-label="前">${I('tl')}</button><button aria-label="后">${I('tr')}</button></div>
${TABS.map((t,i)=>`${i==5?'<span class="gap"></span>':''}<button class="tab${i==3?' on':''}${i==4?' or':''}${i>5&&i<10?' lat':''}"${i==10?' style="padding:0 13px"':''}>${t}</button>`).join('')}
<button class="add" aria-label="新工作表">${I('add')}</button><span class="dots">${I('dots')}</span><div class="h"><button aria-label="左">${I('al')}</button><div class="th"></div><button aria-label="右">${I('ar')}</button></div>`);

define('status-bar',()=>`<style>${BASE}
:host{display:flex;flex:none;height:20px;background:#f0f0f0;align-items:center;padding:0 16px 0 7px;box-shadow:0 -1px #c0c0c0;position:relative}
.a{margin-right:19px}.b{margin-right:17px}.v{display:flex;margin-left:auto}.v button{width:38px;height:20px}.v .on{background:#c6c6c6}
.z{width:14px;height:16px}.z path{stroke:#555;stroke-width:2}
input{appearance:none;margin:0;width:102px;height:14px;background:linear-gradient(#999,#999) center/100% 1px no-repeat}input::-webkit-slider-thumb{appearance:none;width:4px;height:11px;background:#666}
.p{margin-left:13px;width:31px;white-space:nowrap}
</style><span class="a">就绪</span><span class="b">数字</span>${I('macro')}<div class="v"><button class="on" aria-label="普通">${I('vnorm')}</button><button aria-label="页面布局">${I('vpage')}</button><button aria-label="分页预览">${I('vbreak')}</button></div>
<button class="z" aria-label="缩小"><svg width="6" height="2"><path d="M0 1h6"/></svg></button><input type="range" aria-label="缩放" value="50"><button class="z" aria-label="放大"><svg width="8" height="8"><path d="M0 4h8M4 0v8"/></svg></button><span class="p">100%</span>`);

define('ime-bar',()=>`<style>${BASE}
:host{position:absolute;left:848px;bottom:0;width:226px;height:24px;display:flex;align-items:center;background:#fff;border:1px solid #b5d3ee;border-bottom:0;color:#0a6fdc;font:700 15px/20px "Noto Sans CJK SC",sans-serif}
.s{margin:-7px 4px 0 0;width:28px;display:flex}button{width:24px;height:22px;flex:none}
</style><span class="s">${I('sogou')}</span><button>中</button>${['punct','mic','kbd','shirt','robot','apps','gear'].map(n=>`<button aria-label="${n}">${I(n)}</button>`).join('')}`);

define('site-mark',()=>`<style>:host{position:absolute;right:11px;bottom:6px;display:flex;align-items:flex-start;pointer-events:none;opacity:.8}
div{display:flex;flex-direction:column;white-space:nowrap}.c{font:700 21px/24px "Noto Sans CJK SC",sans-serif;color:#4c8fd0}.w{font:700 16px/18px "Liberation Sans",sans-serif;color:#4ab866;padding-left:1px}
</style>${I('swirl')}<div><span class="c">极光下载站</span><span class="w">www.xz7.com</span></div>`);
</script>
</body>
</html>
